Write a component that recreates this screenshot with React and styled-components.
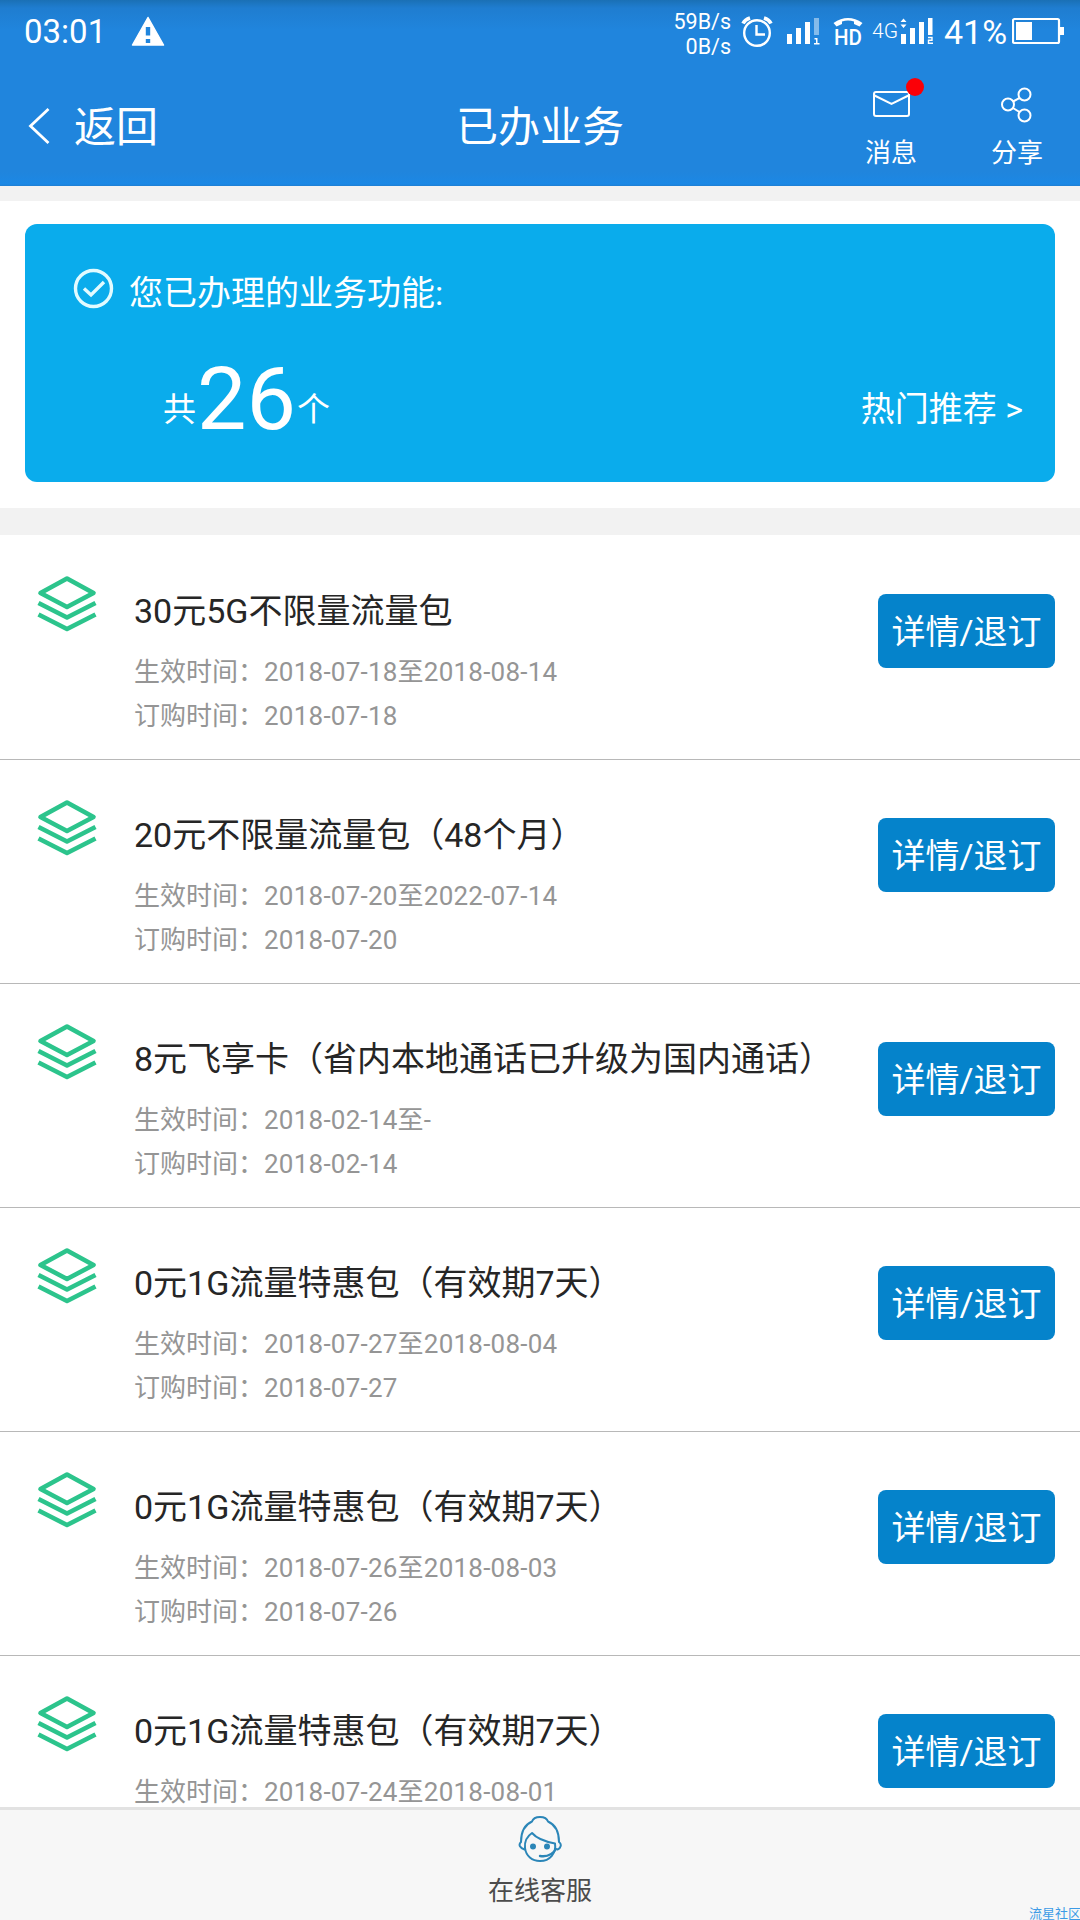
import React from 'react';
import styled, { createGlobalStyle } from 'styled-components';

const GlobalStyle = createGlobalStyle`
  * {
    box-sizing: border-box;
  }

  body {
    margin: 0;
    background: #fff;
    font-family: Roboto, 'Noto Sans CJK SC', sans-serif;
  }
`;

const Screen = styled.div`
  position: relative;
  display: flex;
  flex-direction: column;
  width: 1080px;
  height: 1920px;
  overflow: hidden;
  background: #fff;
`;

const Header = styled.header`
  flex: none;
  height: 186px;
  color: #fff;
  background: linear-gradient(#1a70b5 0, #1f7dd0 8px, #2085dd 30px, #2085dd 172px, #1b88e5 184px, #1f7fd2 186px);
`;

const StatusBar = styled.div`
  display: flex;
  align-items: center;
  justify-content: space-between;
  height: 62px;
  padding: 0 16px 0 24px;
`;

const StatusGroup = styled.div`
  display: flex;
  align-items: center;
`;

const Clock = styled.span`
  width: 107px;
  padding-top: 1px;
  font-size: 33px;
  line-height: 62px;
`;

const Speed = styled.div`
  margin-right: 10px;
  padding-top: 5px;
  font-size: 21.5px;
  line-height: 25px;
  text-align: right;
`;

const Network = styled.span`
  width: 28px;
  font-size: 21px;
  font-weight: 300;
  line-height: 62px;
`;

const Percent = styled.span`
  width: 78px;
  padding: 1px 0 0 10px;
  font-size: 34px;
  line-height: 62px;
`;

const StatusIcon = styled.svg`
  display: block;
  flex: none;
  margin-right: ${props => props.$gap || 0}px;
`;

const NavBar = styled.nav`
  display: grid;
  grid-template-columns: 1fr auto 1fr;
  height: 124px;
`;

const Back = styled.a`
  display: flex;
  align-items: center;
  gap: 23px;
  height: 132px;
  padding-left: 28px;
  font-size: 42px;
  line-height: 128px;

  svg {
    margin-bottom: 5px;
  }
`;

const PageTitle = styled.h1`
  margin: 0;
  font-size: 42px;
  font-weight: 400;
  line-height: 132px;
`;

const Actions = styled.div`
  display: flex;
  justify-content: flex-end;
  gap: 74px;
  padding: 22px 37px 0 0;
`;

const Action = styled.a`
  position: relative;
  display: flex;
  flex-direction: column;
  align-items: center;
  width: 52px;
  font-size: 26px;
  line-height: 36px;

  svg {
    display: block;
    margin-bottom: 9px;
  }
`;

const Dot = styled.i`
  position: absolute;
  top: -6px;
  left: 41px;
  width: 18px;
  height: 18px;
  border-radius: 50%;
  background: #fb0007;
`;

const Divider = styled.div`
  flex: none;
  height: ${props => props.$height}px;
  background: #f2f2f2;
`;

const Summary = styled.section`
  flex: none;
  height: 307px;
  padding: 23px 25px 0;
`;

const SummaryCard = styled.div`
  height: 258px;
  padding: 41px 32px 0 48px;
  border-radius: 12px;
  color: #fff;
  background: #0aacec;
  font-size: 34px;
`;

const SummaryHead = styled.div`
  display: flex;
  align-items: center;
  gap: 15px;
  height: 50px;

  svg {
    margin-bottom: 4px;
  }
`;

const SummaryBody = styled.div`
  display: flex;
  align-items: baseline;
  justify-content: space-between;
  height: 110px;
  padding: 21px 0 0 90px;
`;

const Count = styled.div`
  font-size: 33px;
  line-height: 110px;

  strong {
    position: relative;
    top: 8px;
    margin: 0 1px;
    font-size: 88px;
    font-weight: 400;
  }
`;

const HotLink = styled.a`
  line-height: 110px;
`;

const List = styled.main`
  flex: 1;
  min-height: 0;
  padding-top: 1px;
  overflow: hidden;
`;

const Row = styled.article`
  display: flex;
  align-items: flex-start;
  height: 224px;
  padding: 0 25px 0 37px;
  border-bottom: 1px solid #b8b8b8;
`;

const RowIcon = styled.svg`
  flex: none;
  margin-top: 39px;
`;

const RowText = styled.div`
  flex: 1;
  padding: 50px 0 0 37px;
  white-space: nowrap;
`;

const RowTitle = styled.h2`
  margin: 0 0 14px;
  color: #262626;
  font-size: 34px;
  font-weight: 400;
  line-height: 50px;
`;

const RowMeta = styled.p`
  margin: 0;
  color: #959595;
  font-size: 26px;
  line-height: 44px;

  span {
    letter-spacing: 0.23px;
  }
`;

const DetailButton = styled.button`
  flex: none;
  width: 177px;
  height: 74px;
  margin-top: 58px;
  padding: 2px 0 0;
  border: 0;
  border-radius: 8px;
  color: #fff;
  background: #0583cb;
  font-family: inherit;
  font-size: 34px;
  line-height: 72px;
`;

const Footer = styled.footer`
  position: relative;
  flex: none;
  display: flex;
  flex-direction: column;
  align-items: center;
  height: 113px;
  padding-top: 5px;
  border-top: 3px solid #e2e2e2;
  background: #f7f7f7;
  color: #4c4c4c;
  font-size: 26px;
  line-height: 40px;

  svg {
    display: block;
    margin-bottom: 8px;
  }
`;

const Watermark = styled.span`
  position: absolute;
  right: -1px;
  bottom: -2px;
  color: #3d9be6;
  font-size: 13px;
  line-height: 16px;
`;

const services = [
  { title: '30元5G不限量流量包', period: '2018-07-18至2018-08-14', ordered: '2018-07-18' },
  { title: '20元不限量流量包（48个月）', period: '2018-07-20至2022-07-14', ordered: '2018-07-20' },
  { title: '8元飞享卡（省内本地通话已升级为国内通话）', period: '2018-02-14至-', ordered: '2018-02-14' },
  { title: '0元1G流量特惠包（有效期7天）', period: '2018-07-27至2018-08-04', ordered: '2018-07-27' },
  { title: '0元1G流量特惠包（有效期7天）', period: '2018-07-26至2018-08-03', ordered: '2018-07-26' },
  { title: '0元1G流量特惠包（有效期7天）', period: '2018-07-24至2018-08-01' },
];

const WarningIcon = () => (
  <StatusIcon width="34" height="30" viewBox="0 0 34 30">
    <path d="M17 1.5 32.5 29h-31z" fill="#fff" stroke="#fff" strokeWidth="1.5" strokeLinejoin="round" />
    <path d="M17 11v8.5M17 23v4" stroke="#2085dd" strokeWidth="4.4" />
  </StatusIcon>
);

const AlarmIcon = () => (
  <StatusIcon $gap={14} width="32" height="32" viewBox="0 -.5 32 32" fill="none" stroke="#fff" strokeWidth="2.4">
    <circle cx="16" cy="17.5" r="12.8" />
    <path d="M15.5 9.5v9.5h8.5" />
    <path d="M2 8q2-4 7-5.5M30 8q-2-4-7-5.5" strokeWidth="3.6" />
  </StatusIcon>
);

const SignalOne = () => (
  <StatusIcon $gap={11} width="34" height="28" viewBox="0 0 34 28" fill="#fff">
    <path d="M0 17h5v10H0zM9 11h5v16H9zM18 5h5v22h-5z" />
    <path d="M27 1h5v17h-5z" opacity=".45" />
    <path d="M27.5 21h3v5h2v1.5h-5.5v-1.5h2v-3.5h-1.5z" />
  </StatusIcon>
);

const HdIcon = () => (
  <StatusIcon $gap={8} width="32" height="36" viewBox="0 -3 32 36">
    <path d="M1.5 7Q16-3 30.5 7L27.5 10.5 22 8V5.5Q16 3.5 10 5.5V8L4.5 10.5z" fill="#fff" />
    <text x="16" y="28.5" fill="#fff" fontFamily="Roboto" fontSize="22" fontWeight="500" textAnchor="middle" textLength="28" lengthAdjust="spacingAndGlyphs">
      HD
    </text>
  </StatusIcon>
);

const SignalTwo = () => (
  <StatusIcon width="34" height="28" viewBox="0 0 34 28" fill="#fff">
    <path d="M1 17h5v10H1zM10 11h5v16h-5zM19 5h5v22h-5zM28 1h4.5v17H28z" />
    <path d="M.5 5 3.5 1.5 6.5 5zM.5 7.5 3.5 11 6.5 7.5z" />
    <path d="M28 20.5h4v2.8h-3.5v2.9H33" fill="none" stroke="#fff" strokeWidth="1.4" />
  </StatusIcon>
);

const BatteryIcon = () => (
  <StatusIcon width="52" height="28" viewBox="0 0 52 28">
    <rect x="1" y="2" width="46" height="24" rx="1.5" fill="none" stroke="#fff" strokeWidth="2.2" />
    <path d="M4 5h16v18H4zM48 10h4v8h-4z" fill="#fff" />
  </StatusIcon>
);

const LayersIcon = () => (
  <RowIcon width="60" height="57" viewBox="0 0 60 57" fill="none" stroke="#2cc48c" strokeWidth="4.6" strokeLinejoin="round">
    <path d="M30 3.5 56.5 18 30 32 3.5 18z" />
    <path d="M1.5 28 30 42.5 58.5 28" />
    <path d="M1.5 39.5 30 54 58.5 39.5" />
  </RowIcon>
);

const AgentIcon = () => (
  <svg width="44" height="48" viewBox="0 0 44 48" fill="none" stroke="#2b86b8" strokeWidth="2" strokeLinecap="round" strokeLinejoin="round">
    <path d="M14 6.5C16 .5 28 .5 30 6.5C38 10 41 18 41 27C44 29 43 33 39.5 34.5M14 6.5C6 10 3 18 3 27C0 30 2 33 6.5 34.5" />
    <path d="M7 33C6.5 28 8 22 14 18C20 25 29 27 37 28.5C38.5 38 32 46 22 46C14 46 8 41 7 33z" />
    <path d="M22 41C29 42 35 39 38 34" strokeWidth="2.4" />
    <circle cx="15" cy="31.5" r="2" fill="#2b86b8" />
    <circle cx="29" cy="31.5" r="2" fill="#2b86b8" />
  </svg>
);

const ServiceRow = ({ service }) => (
  <Row>
    <LayersIcon />
    <RowText>
      <RowTitle>{service.title}</RowTitle>
      <RowMeta>
        生效时间：<span>{service.period}</span>
      </RowMeta>
      {service.ordered && (
        <RowMeta>
          订购时间：<span>{service.ordered}</span>
        </RowMeta>
      )}
    </RowText>
    <DetailButton>详情/退订</DetailButton>
  </Row>
);

const App = () => {
  return (
    <Screen>
      <GlobalStyle />
      <Header>
        <StatusBar>
          <StatusGroup>
            <Clock>03:01</Clock>
            <WarningIcon />
          </StatusGroup>
          <StatusGroup>
            <Speed>
              59B/s
              <br />
              0B/s
            </Speed>
            <AlarmIcon />
            <SignalOne />
            <HdIcon />
            <Network>4G</Network>
            <SignalTwo />
            <Percent>41%</Percent>
            <BatteryIcon />
          </StatusGroup>
        </StatusBar>
        <NavBar>
          <Back>
            <svg width="23" height="38" viewBox="0 0 23 38" fill="none" stroke="#fff" strokeWidth="2.8">
              <path d="M20.5 2 2.5 19 20.5 36" />
            </svg>
            返回
          </Back>
          <PageTitle>已办业务</PageTitle>
          <Actions>
            <Action>
              <svg width="38" height="42" viewBox="-.5 0 38 42" fill="none" stroke="#fff" strokeWidth="2">
                <rect x="1.5" y="8" width="35" height="24" rx="2" />
                <path d="M2 11.5 19 20 36 11.5" />
              </svg>
              <Dot />
              消息
            </Action>
            <Action>
              <svg width="32" height="42" viewBox="0.5 0 32 42" fill="none" stroke="#fff" strokeWidth="2">
                <circle cx="7.5" cy="20.5" r="6" />
                <circle cx="24" cy="10.5" r="6" />
                <circle cx="24" cy="31.5" r="6" />
                <path d="M12.5 17.5 19 14M12.5 24 19 28" />
              </svg>
              分享
            </Action>
          </Actions>
        </NavBar>
      </Header>
      <Divider $height={15} />
      <Summary>
        <SummaryCard>
          <SummaryHead>
            <svg width="41" height="41" viewBox="0 0 41 41" fill="none" stroke="#e2fbff" strokeWidth="3.4">
              <circle cx="20.5" cy="20.5" r="18" />
              <path d="M11 20.5 18 27 31 14" />
            </svg>
            您已办理的业务功能:
          </SummaryHead>
          <SummaryBody>
            <Count>
              共<strong>26</strong>个
            </Count>
            <HotLink>热门推荐 &gt;</HotLink>
          </SummaryBody>
        </SummaryCard>
      </Summary>
      <Divider $height={27} />
      <List>
        {services.map((service, index) => (
          <ServiceRow key={index} service={service} />
        ))}
      </List>
      <Footer>
        <AgentIcon />
        在线客服
        <Watermark>流星社区</Watermark>
      </Footer>
    </Screen>
  );
};

export default App;
